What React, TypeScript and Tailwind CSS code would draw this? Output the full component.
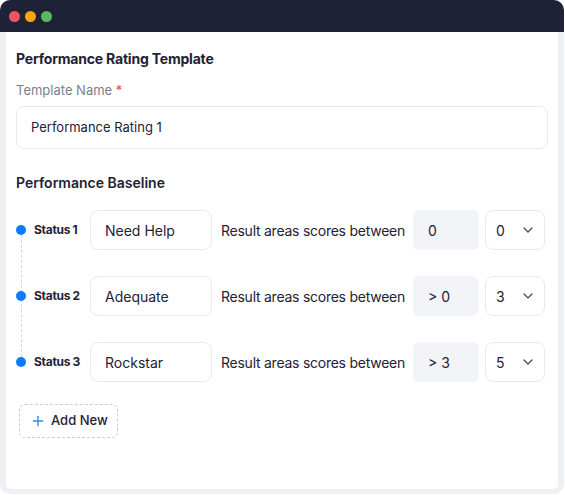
import React from "react";
import { ChevronDown, Plus } from "lucide-react";

const rows = [
  { label: "Status 1", name: "Need Help", from: "0", to: "0" },
  { label: "Status 2", name: "Adequate", from: "> 0", to: "3" },
  { label: "Status 3", name: "Rockstar", from: "> 3", to: "5" },
];

export default function App() {
  return (
    <div
      className="w-[565px] h-[495px] bg-white"
      style={{ fontFamily: "Inter, 'Noto Sans', sans-serif" }}
    >
      <div className="w-[564px] h-[494px] rounded-[10px] bg-[#eef0f3] flex flex-col overflow-hidden">
        <div className="h-[32px] shrink-0 bg-[#1d2237] flex items-center gap-[5px] pl-[9px]">
          <span className="w-[11px] h-[11px] rounded-full bg-[#f0555f]" />
          <span className="w-[11px] h-[11px] rounded-full bg-[#f5a60f]" />
          <span className="w-[11px] h-[11px] rounded-full bg-[#5cb85c]" />
        </div>
        <div className="mx-[6px] mb-[5px] flex-1 bg-white rounded-b-[5px] pl-[10px] pr-[10px] pt-[17px] flex flex-col">
          <h1 className="text-[14px] leading-[20px] font-bold text-[#1e2235] tracking-[-0.2px]">
            Performance Rating Template
          </h1>
          <div className="mt-[12px] text-[13px] leading-[18px] text-[#7b7f8c]">
            Template Name <span className="text-[#ef4444]">*</span>
          </div>
          <div className="mt-[7px] h-[43px] rounded-[8px] border border-[#e7e9ee] flex items-center pl-[14px] text-[13px] text-[#1e2235]">
            Performance Rating 1
          </div>
          <h2 className="mt-[24px] text-[14px] leading-[20px] font-semibold text-[#1e2235]">
            Performance Baseline
          </h2>
          <div className="relative mt-[17px] flex flex-col gap-[26px]">
            <div className="absolute left-[4.5px] top-[20px] h-[132px] border-l border-dashed border-[#d3d6dc]" />
            {rows.map((r) => (
              <div key={r.label} className="flex items-center h-[40px]">
                <span className="relative w-[10px] h-[10px] rounded-full bg-[#0b7bff]" />
                <span className="ml-[8px] w-[56px] text-[12px] font-bold text-[#1e2235] tracking-[-0.3px]">
                  {r.label}
                </span>
                <div className="w-[122px] h-[40px] rounded-[8px] border border-[#e7e9ee] flex items-center pl-[14px] text-[14px] text-[#1e2235]">
                  {r.name}
                </div>
                <span className="ml-[9px] text-[14px] text-[#1e2235] whitespace-nowrap tracking-[-0.25px]">
                  Result areas scores between
                </span>
                <div className="ml-auto w-[66px] h-[40px] rounded-[6px] bg-[#f3f4f8] flex items-center pl-[15px] text-[14px] text-[#1e2235]">
                  {r.from}
                </div>
                <div className="ml-[6px] mr-[3px] w-[60px] h-[40px] rounded-[8px] border border-[#e7e9ee] flex items-center justify-between pl-[10px] pr-[8px] text-[14px] text-[#1e2235]">
                  <span>{r.to}</span>
                  <ChevronDown size={16} strokeWidth={2} className="text-[#4b5060]" />
                </div>
              </div>
            ))}
          </div>
          <button className="mt-[22px] ml-[3px] w-[99px] h-[34px] rounded-[6px] border border-dashed border-[#c9ccd3] flex items-center pl-[10px] gap-[5px] text-[13px] font-medium text-[#1e2235]">
            <Plus size={16} strokeWidth={2} className="text-[#2b8cf0]" />
            Add New
          </button>
        </div>
      </div>
    </div>
  );
}
